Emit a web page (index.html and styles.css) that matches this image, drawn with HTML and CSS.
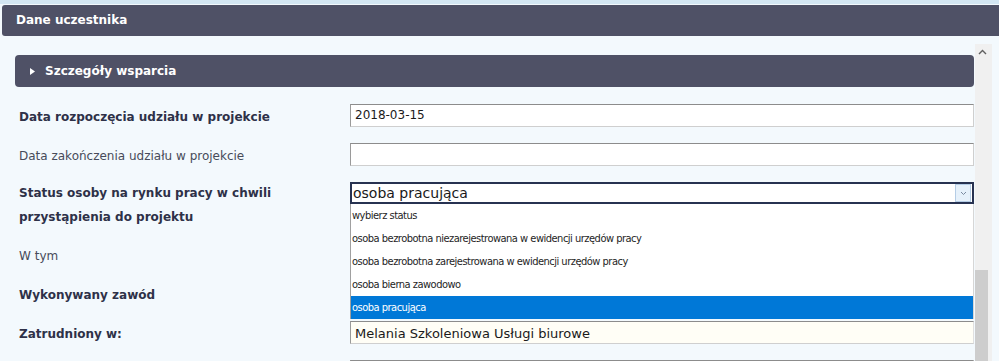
FILE: index.html
```html
<!DOCTYPE html>
<html lang="pl">
<head>
  <meta charset="UTF-8">
  <title>Dane uczestnika</title>
  <link rel="stylesheet" href="styles.css">
</head>
<body>

<div class="page">
  <div class="panel-head">Dane uczestnika</div>

  <div class="panel-body">
    <div class="content">
      <div class="section-head">
        <svg class="caret" width="5" height="7" viewBox="0 0 5 7"><path d="M0 0 L5 3.5 L0 7 Z" fill="#fff"/></svg>
        Szczegóły wsparcia
      </div>

      <div class="form">
        <div class="row">
          <div class="label bold">Data rozpoczęcia udziału w projekcie</div>
          <div class="field"><div class="input">2018-03-15</div></div>
        </div>

        <div class="row">
          <div class="label">Data zakończenia udziału w projekcie</div>
          <div class="field"><div class="input"></div></div>
        </div>

        <div class="row">
          <div class="label bold two-line">Status osoby na rynku pracy w chwili<br>przystąpienia do projektu</div>
          <div class="field field-top">
            <div class="select">
              <span>osoba pracująca</span>
              <span class="select-btn">
                <svg width="7" height="5" viewBox="0 0 7 5"><path d="M1 1 L3.5 3.5 L6 1" fill="none" stroke="#7a8aa0" stroke-width="1"/></svg>
              </span>
            </div>
            <ul class="dropdown">
              <li>wybierz status</li>
              <li>osoba bezrobotna niezarejestrowana w ewidencji urzędów pracy</li>
              <li>osoba bezrobotna zarejestrowana w ewidencji urzędów pracy</li>
              <li>osoba bierna zawodowo</li>
              <li class="selected">osoba pracująca</li>
            </ul>
          </div>
        </div>

        <div class="row">
          <div class="label">W tym</div>
          <div class="field"><div class="input"></div></div>
        </div>

        <div class="row">
          <div class="label bold">Wykonywany zawód</div>
          <div class="field"><div class="input"></div></div>
        </div>

        <div class="row">
          <div class="label bold">Zatrudniony w:</div>
          <div class="field"><div class="input input-filled">Melania Szkoleniowa Usługi biurowe</div></div>
        </div>

        <div class="row">
          <div class="label"></div>
          <div class="field"><div class="input"></div></div>
        </div>
      </div>
    </div>

    <div class="scrollbar">
      <div class="sb-up">
        <svg width="9" height="6" viewBox="0 0 9 6"><path d="M1 5 L4.5 1.5 L8 5" fill="none" stroke="#606060" stroke-width="1.4"/></svg>
      </div>
      <div class="sb-thumb"></div>
    </div>
  </div>
</div>

</body>
</html>
```

FILE: styles.css
```css
body {
  margin: 0;
  font-family: 'DejaVu Sans', Verdana, sans-serif;
  background: #f3f9fd;
  height: 361px;
  overflow: hidden;
  border-top: 4px solid #d3e6f2;
  box-sizing: border-box;
}

.page {
  padding-top: 1px;
}

.panel-head {
  margin-left: 2px;
  height: 31px;
  line-height: 31px;
  padding-left: 14px;
  background: #4f5166;
  color: white;
  font-weight: bold;
  font-size: 12px;
  border-radius: 3px 0 0 3px;
}

.panel-body {
  display: flex;
  margin-top: 8px;
  height: 317px;
  overflow: hidden;
}

.content {
  width: 975px;
  padding-top: 11px;
  overflow: hidden;
}

.section-head {
  margin: 0 1px 0 15px;
  height: 32px;
  background: #4f5166;
  border-radius: 4px;
  color: white;
  font-weight: bold;
  font-size: 12px;
  display: flex;
  align-items: center;
  gap: 10px;
  padding-left: 15px;
}

.form {
  padding: 18px 0 0 19px;
  display: flex;
  flex-direction: column;
  gap: 15px;
}

.row {
  display: grid;
  grid-template-columns: 331px 624px;
  min-height: 24px;
}

.label {
  font-size: 12px;
  line-height: 24px;
  color: #474b5a;
}

.label.bold {
  font-weight: bold;
  color: #2e3148;
}

.two-line {
  margin-top: -2px;
}

.field {
  position: relative;
  margin-top: -1px;
}

.field-top {
  margin-top: -1px;
}

.input {
  height: 23px;
  box-sizing: border-box;
  background: white;
  border: 1px solid #cfcfcf;
  border-top-color: #8c8c8c;
  border-left-color: #9a9a9a;
  font-size: 12px;
  line-height: 21px;
  padding-left: 4px;
  color: #1a1a1a;
}

.input-filled {
  background: #fffef6;
  font-size: 13px;
  line-height: 23px;
  border-right-color: #e0e0e0;
}

.select {
  height: 22px;
  box-sizing: border-box;
  border: 2px solid #273251;
  background: white;
  display: flex;
  align-items: center;
  justify-content: space-between;
  padding-left: 1px;
  font-size: 14px;
  color: #1a1a1a;
}

.select-btn {
  width: 14px;
  height: 16px;
  margin-right: 1px;
  background: #e6f1fb;
  border: 1px solid #b5cde6;
  display: flex;
  align-items: center;
  justify-content: center;
}

.dropdown {
  position: absolute;
  top: 22px;
  left: 0;
  right: 0;
  margin: 0;
  padding: 0;
  list-style: none;
  background: white;
  border-left: 1px solid #a0a0a0;
  border-right: 1px solid #d6d6d6;
  z-index: 2;
}

.dropdown li {
  height: 23px;
  line-height: 23px;
  padding-left: 1px;
  font-family: 'DejaVu Sans Condensed', 'DejaVu Sans', sans-serif;
  font-stretch: condensed;
  font-size: 11px;
  letter-spacing: -0.5px;
  color: #1e1e1e;
}

.dropdown li.selected {
  background: #0078d7;
  color: white;
}

.scrollbar {
  width: 17px;
  background: #f0f0f0;
  display: flex;
  flex-direction: column;
  align-items: flex-start;
}

.sb-up {
  height: 17px;
  width: 14px;
  display: flex;
  align-items: center;
  justify-content: center;
}

.sb-thumb {
  margin-top: 211px;
  width: 13px;
  height: 100px;
  background: #cdcdcd;
}
```
